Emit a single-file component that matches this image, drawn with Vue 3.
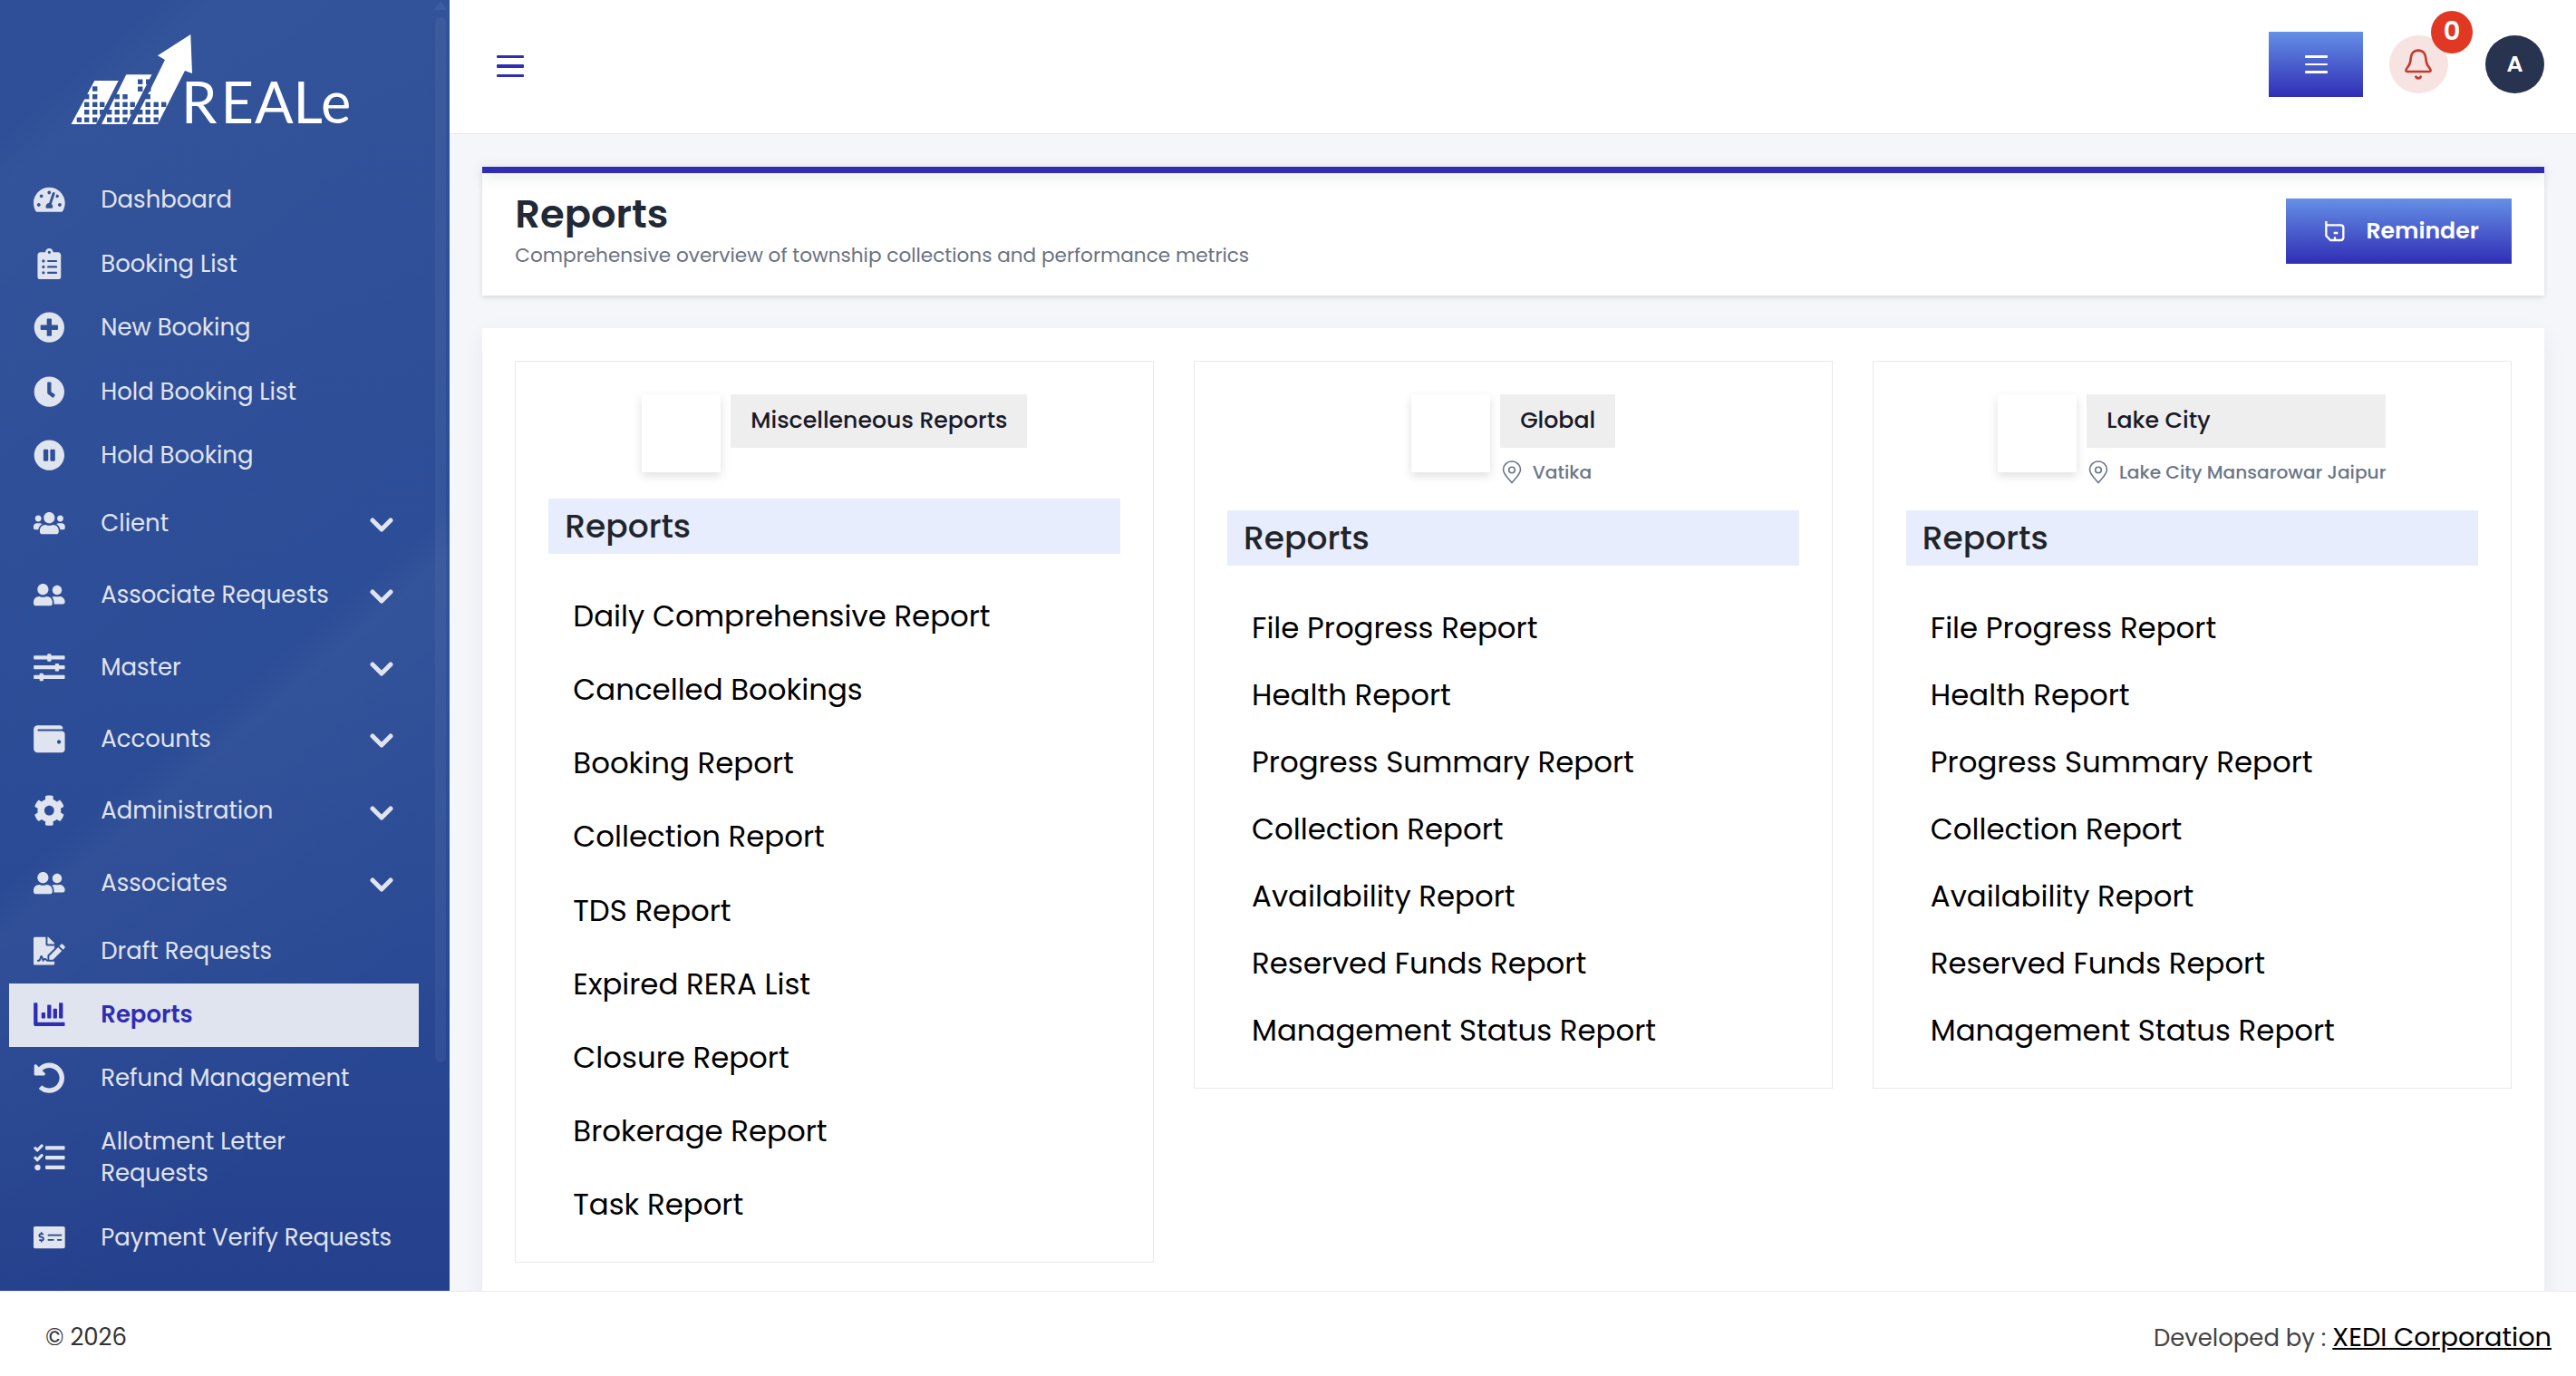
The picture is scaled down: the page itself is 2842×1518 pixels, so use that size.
<script setup>
const circle = 'M256 8C119 8 8 119 8 256s111 248 248 248 248-111 248-248S393 8 256 8z'
const icons = {
  gauge: { w: 576, d: 'M288 32C128.94 32 0 160.94 0 320c0 52.8 14.25 102.26 39.06 144.8 5.61 9.62 16.3 15.2 27.44 15.2h443c11.14 0 21.83-5.58 27.44-15.2C561.75 422.26 576 372.8 576 320c0-159.06-128.94-288-288-288zm0 64c14.71 0 26.58 10.13 30.32 23.65-1.11 2.26-2.64 4.23-3.45 6.67l-9.22 27.67c-5.13 3.49-10.97 6.01-17.64 6.01-17.67 0-32-14.33-32-32S270.33 96 288 96zM96 384c-17.67 0-32-14.33-32-32s14.33-32 32-32 32 14.33 32 32-14.33 32-32 32zm48-160c-17.67 0-32-14.33-32-32s14.33-32 32-32 32 14.33 32 32-14.33 32-32 32zm246.77-72.41l-61.33 184C343.13 347.33 352 364.54 352 384c0 11.72-3.38 22.55-8.88 32H232.88c-5.5-9.45-8.88-20.28-8.88-32 0-33.94 26.5-61.43 59.9-63.59l61.34-184.01c4.17-12.56 17.73-19.45 30.36-15.17 12.57 4.19 19.35 17.79 15.17 30.36zm14.66 57.2l15.52-46.55c3.47-1.29 7.13-2.23 11.05-2.23 17.67 0 32 14.33 32 32s-14.33 32-32 32c-11.38-.01-20.89-6.28-26.57-15.22zM480 384c-17.67 0-32-14.33-32-32s14.33-32 32-32 32 14.33 32 32-14.33 32-32 32z' },
  clipboard: { w: 384, d: 'M336 64h-80c0-35.3-28.7-64-64-64s-64 28.7-64 64H48C21.5 64 0 85.5 0 112v352c0 26.5 21.5 48 48 48h288c26.5 0 48-21.5 48-48V112c0-26.5-21.5-48-48-48zM96 424c-13.3 0-24-10.7-24-24s10.7-24 24-24 24 10.7 24 24-10.7 24-24 24zm0-96c-13.3 0-24-10.7-24-24s10.7-24 24-24 24 10.7 24 24-10.7 24-24 24zm0-96c-13.3 0-24-10.7-24-24s10.7-24 24-24 24 10.7 24 24-10.7 24-24 24zm96-192c13.3 0 24 10.7 24 24s-10.7 24-24 24-24-10.7-24-24 10.7-24 24-24zm128 368c0 4.4-3.6 8-8 8H168c-4.4 0-8-3.6-8-8v-16c0-4.4 3.6-8 8-8h144c4.4 0 8 3.6 8 8v16zm0-96c0 4.4-3.6 8-8 8H168c-4.4 0-8-3.6-8-8v-16c0-4.4 3.6-8 8-8h144c4.4 0 8 3.6 8 8v16zm0-96c0 4.4-3.6 8-8 8H168c-4.4 0-8-3.6-8-8v-16c0-4.4 3.6-8 8-8h144c4.4 0 8 3.6 8 8v16z' },
  plus: { w: 512, d: circle + 'm144 276c0 6.6-5.4 12-12 12h-92v92c0 6.6-5.4 12-12 12h-56c-6.6 0-12-5.4-12-12v-92h-92c-6.6 0-12-5.4-12-12v-56c0-6.6 5.4-12 12-12h92v-92c0-6.6 5.4-12 12-12h56c6.6 0 12 5.4 12 12v92h92c6.6 0 12 5.4 12 12v56z' },
  clock: { w: 512, d: circle + 'm92.49 313l-20 25a16 16 0 0 1-22.49 2.5l-67-49.72a40 40 0 0 1-15-31.23V112a16 16 0 0 1 16-16h32a16 16 0 0 1 16 16V256l58 42.5A16 16 0 0 1 348.49 321z' },
  pause: { w: 512, d: circle + 'm-16 328c0 8.8-7.2 16-16 16h-48c-8.8 0-16-7.2-16-16V176c0-8.8 7.2-16 16-16h48c8.8 0 16 7.2 16 16v160zm112 0c0 8.8-7.2 16-16 16h-48c-8.8 0-16-7.2-16-16V176c0-8.8 7.2-16 16-16h48c8.8 0 16 7.2 16 16v160z' },
  users: { w: 640, d: 'M96 224c35.3 0 64-28.7 64-64s-28.7-64-64-64-64 28.7-64 64 28.7 64 64 64zm448 0c35.3 0 64-28.7 64-64s-28.7-64-64-64-64 28.7-64 64 28.7 64 64 64zm32 32h-64c-17.6 0-33.5 7.1-45.1 18.6 40.3 22.1 68.9 62 75.1 109.4h66c17.7 0 32-14.3 32-32v-32c0-35.3-28.7-64-64-64zm-256 0c61.9 0 112-50.1 112-112S381.9 32 320 32 208 82.1 208 144s50.1 112 112 112zm76.8 32h-8.3c-20.8 10-43.9 16-68.5 16s-47.6-6-68.5-16h-8.3C179.6 288 128 339.6 128 403.2V432c0 26.5 21.5 48 48 48h288c26.5 0 48-21.5 48-48v-28.8c0-63.6-51.6-115.2-115.2-115.2zm-223.7-13.4C161.5 263.1 145.6 256 128 256H64c-35.3 0-64 28.7-64 64v32c0 17.7 14.3 32 32 32h65.9c6.3-47.4 34.9-87.3 75.2-109.4z' },
  friends: { w: 640, d: 'M192 256c61.9 0 112-50.1 112-112S253.9 32 192 32 80 82.1 80 144s50.1 112 112 112zm76.8 32h-8.3c-20.8 10-43.9 16-68.5 16s-47.6-6-68.5-16h-8.3C51.6 288 0 339.6 0 403.2V432c0 26.5 21.5 48 48 48h288c26.5 0 48-21.5 48-48v-28.8c0-63.6-51.6-115.2-115.2-115.2zM480 256c53 0 96-43 96-96s-43-96-96-96-96 43-96 96 43 96 96 96zm48 32h-3.8c-13.9 4.8-28.6 8-44.2 8s-30.3-3.2-44.2-8H432c-20.4 0-39.2 5.9-55.7 15.4 24.4 26.3 39.7 61.2 39.7 99.8v38.4c0 2.2-.5 4.3-.6 6.4H592c26.5 0 48-21.5 48-48 0-61.9-50.1-112-112-112z' },
  sliders: { w: 512, d: 'M496 384H160v-16c0-8.8-7.2-16-16-16h-32c-8.8 0-16 7.2-16 16v16H16c-8.8 0-16 7.2-16 16v32c0 8.8 7.2 16 16 16h80v16c0 8.8 7.2 16 16 16h32c8.8 0 16-7.2 16-16v-16h336c8.8 0 16-7.2 16-16v-32c0-8.8-7.2-16-16-16zm0-160h-80v-16c0-8.8-7.2-16-16-16h-32c-8.8 0-16 7.2-16 16v16H16c-8.8 0-16 7.2-16 16v32c0 8.8 7.2 16 16 16h336v16c0 8.8 7.2 16 16 16h32c8.8 0 16-7.2 16-16v-16h80c8.8 0 16-7.2 16-16v-32c0-8.8-7.2-16-16-16zm0-160H288V48c0-8.8-7.2-16-16-16h-32c-8.8 0-16 7.2-16 16v16H16C7.2 64 0 71.2 0 80v32c0 8.8 7.2 16 16 16h208v16c0 8.8 7.2 16 16 16h32c8.8 0 16-7.2 16-16v-16h208c8.8 0 16-7.2 16-16V80c0-8.8-7.2-16-16-16z' },
  wallet: { w: 512, d: 'M461.2 128H80c-8.84 0-16-7.16-16-16s7.16-16 16-16h384c8.84 0 16-7.16 16-16 0-26.51-21.49-48-48-48H64C28.65 32 0 60.65 0 96v320c0 35.35 28.65 64 64 64h397.2c28.02 0 50.8-21.53 50.8-48V176c0-26.47-22.78-48-50.8-48zM416 336c-17.67 0-32-14.33-32-32s14.33-32 32-32 32 14.33 32 32-14.33 32-32 32z' },
  cog: { w: 512, d: 'M487.4 315.7l-42.6-24.6c4.3-23.2 4.3-47 0-70.2l42.6-24.6c4.9-2.8 7.1-8.6 5.5-14-11.1-35.6-30-67.8-54.7-94.6-3.8-4.1-10-5.1-14.8-2.3L380.8 110c-17.9-15.4-38.5-27.3-60.8-35.1V25.8c0-5.6-3.9-10.5-9.4-11.7-36.7-8.2-74.3-7.8-109.2 0-5.5 1.2-9.4 6.1-9.4 11.7V75c-22.2 7.9-42.8 19.8-60.8 35.1L88.7 85.5c-4.9-2.8-11-1.9-14.8 2.3-24.7 26.7-43.6 58.9-54.7 94.6-1.7 5.4.6 11.2 5.5 14L67.3 221c-4.3 23.2-4.3 47 0 70.2l-42.6 24.6c-4.9 2.8-7.1 8.6-5.5 14 11.1 35.6 30 67.8 54.7 94.6 3.8 4.1 10 5.1 14.8 2.3l42.6-24.6c17.9 15.4 38.5 27.3 60.8 35.1v49.2c0 5.6 3.9 10.5 9.4 11.7 36.7 8.2 74.3 7.8 109.2 0 5.5-1.2 9.4-6.1 9.4-11.7v-49.2c22.2-7.9 42.8-19.8 60.8-35.1l42.6 24.6c4.9 2.8 11 1.9 14.8-2.3 24.7-26.7 43.6-58.9 54.7-94.6 1.5-5.5-.7-11.3-5.6-14.1zM256 336c-44.1 0-80-35.9-80-80s35.9-80 80-80 80 35.9 80 80-35.9 80-80 80z' },
  draft: { w: 576, d: 'M218.17 424.14c-2.95-5.92-8.09-6.52-10.17-6.52s-7.22.59-10.02 6.19l-7.67 15.34c-6.37 12.78-25.03 11.37-29.48-2.09L144 386.59l-10.61 31.88c-5.89 17.66-22.38 29.53-41 29.53H80c-8.84 0-16-7.16-16-16s7.16-16 16-16h12.39c4.83 0 9.11-3.08 10.64-7.66l18.19-54.64c3.3-9.81 12.44-16.41 22.78-16.41s19.48 6.59 22.77 16.41l13.88 41.64c19.75-16.19 54.06-9.7 66 14.16 1.89 3.78 5.49 5.95 9.36 6.26v-82.12l128-127.09V160H248c-13.2 0-24-10.8-24-24V0H24C10.7 0 0 10.7 0 24v464c0 13.3 10.7 24 24 24h336c13.3 0 24-10.7 24-24v-40l-128-.11c-16.12-.31-30.58-9.28-37.83-23.75zM384 121.9c0-6.3-2.5-12.4-7-16.9L279.1 7c-4.5-4.5-10.6-7-17-7H256v128h128v-6.1zm-96 225.06V416h68.99l161.68-162.78-67.88-67.88L288 346.96zm280.54-179.63l-31.87-31.87c-9.94-9.94-26.07-9.94-36.01 0l-27.25 27.25 67.88 67.88 27.25-27.25c9.95-9.94 9.95-26.07 0-36.01z' },
  chart: { w: 512, d: 'M332.8 320h38.4c6.4 0 12.8-6.4 12.8-12.8V172.8c0-6.4-6.4-12.8-12.8-12.8h-38.4c-6.4 0-12.8 6.4-12.8 12.8v134.4c0 6.4 6.4 12.8 12.8 12.8zm96 0h38.4c6.4 0 12.8-6.4 12.8-12.8V76.8c0-6.4-6.4-12.8-12.8-12.8h-38.4c-6.4 0-12.8 6.4-12.8 12.8v230.4c0 6.4 6.4 12.8 12.8 12.8zm-288 0h38.4c6.4 0 12.8-6.4 12.8-12.8v-70.4c0-6.4-6.4-12.8-12.8-12.8h-38.4c-6.4 0-12.8 6.4-12.8 12.8v70.4c0 6.4 6.4 12.8 12.8 12.8zm96 0h38.4c6.4 0 12.8-6.4 12.8-12.8V108.8c0-6.4-6.4-12.8-12.8-12.8h-38.4c-6.4 0-12.8 6.4-12.8 12.8v198.4c0 6.4 6.4 12.8 12.8 12.8zM496 384H64V80c0-8.84-7.16-16-16-16H16C7.16 64 0 71.16 0 80v336c0 17.67 14.33 32 32 32h464c8.84 0 16-7.16 16-16v-32c0-8.84-7.16-16-16-16z' },
  undo: { w: 512, d: 'M255.545 8c-66.269.119-126.438 26.233-170.86 68.685L48.971 40.971C33.851 25.851 8 36.559 8 57.941V192c0 13.255 10.745 24 24 24h134.059c21.382 0 32.09-25.851 16.971-40.971l-41.75-41.75c30.864-28.899 70.801-44.907 113.23-45.273 92.398-.798 170.283 73.977 169.484 169.442C423.236 348.009 349.816 424 256 424c-41.127 0-79.997-14.678-110.63-41.556-4.743-4.161-11.906-3.908-16.368.553L89.34 422.659c-4.872 4.872-4.631 12.815.482 17.433C133.798 479.813 192.074 504 256 504c136.966 0 247.999-111.033 248-247.998C504.001 119.193 392.354 7.755 255.545 8z' },
  tasks: { w: 512, d: 'M139.61 35.5a12 12 0 0 0-17 0L58.93 98.81l-22.7-22.12a12 12 0 0 0-17 0L3.53 92.41a12 12 0 0 0 0 17l47.59 47.4a12.78 12.78 0 0 0 17.61 0l15.59-15.62L156.52 69a12.09 12.09 0 0 0 .09-17zm0 159.19a12 12 0 0 0-17 0l-63.68 63.72-22.7-22.1a12 12 0 0 0-17 0L3.53 252a12 12 0 0 0 0 17L51 316.5a12.77 12.77 0 0 0 17.6 0l15.7-15.69 72.2-72.22a12 12 0 0 0 .09-16.9zM64 368c-26.49 0-48.59 21.5-48.59 48S37.53 464 64 464a48 48 0 0 0 0-96zm432 16H208a16 16 0 0 0-16 16v32a16 16 0 0 0 16 16h288a16 16 0 0 0 16-16v-32a16 16 0 0 0-16-16zm0-320H208a16 16 0 0 0-16 16v32a16 16 0 0 0 16 16h288a16 16 0 0 0 16-16V80a16 16 0 0 0-16-16zm0 160H208a16 16 0 0 0-16 16v32a16 16 0 0 0 16 16h288a16 16 0 0 0 16-16v-32a16 16 0 0 0-16-16z' },
  check: { w: 640, d: 'M608 32H32C14.33 32 0 46.33 0 64v384c0 17.67 14.33 32 32 32h576c17.67 0 32-14.33 32-32V64c0-17.67-14.33-32-32-32zM176 327.88V344c0 4.42-3.58 8-8 8h-16c-4.42 0-8-3.58-8-8v-16.29c-11.29-.58-22.27-4.52-31.37-11.35-3.9-2.93-4.1-8.77-.57-12.14l11.75-11.21c2.77-2.64 6.89-2.76 10.13-.73 3.87 2.42 8.26 3.72 12.82 3.72h28.11c6.5 0 11.8-5.92 11.8-13.19 0-5.95-3.61-11.19-8.77-12.73l-45-13.5c-18.59-5.58-31.58-23.42-31.58-43.39 0-24.52 19.05-44.44 42.67-45.07V152c0-4.42 3.58-8 8-8h16c4.42 0 8 3.58 8 8v16.29c11.29.58 22.27 4.51 31.37 11.35 3.9 2.93 4.1 8.77.57 12.14l-11.75 11.21c-2.77 2.64-6.89 2.76-10.13.73-3.87-2.43-8.26-3.72-12.82-3.72h-28.11c-6.5 0-11.8 5.92-11.8 13.19 0 5.95 3.61 11.19 8.77 12.73l45 13.5c18.59 5.58 31.58 23.42 31.58 43.39 0 24.53-19.05 44.44-42.67 45.07zM416 312c0 4.42-3.58 8-8 8H296c-4.42 0-8-3.58-8-8v-16c0-4.42 3.58-8 8-8h112c4.42 0 8 3.58 8 8v16zm160 0c0 4.42-3.58 8-8 8h-80c-4.42 0-8-3.58-8-8v-16c0-4.42 3.58-8 8-8h80c4.42 0 8 3.58 8 8v16zm0-96c0 4.42-3.58 8-8 8H296c-4.42 0-8-3.58-8-8v-16c0-4.42 3.58-8 8-8h272c4.42 0 8 3.58 8 8v16z' },
  box: { w: 512, d: 'M32 70H480C496 70 504 78 504 94V424C504 440 496 448 480 448H32C16 448 8 440 8 424V94C8 78 16 70 32 70z' }
}

const nav = [
  { icon: 'gauge', lines: ['Dashboard'] },
  { icon: 'clipboard', lines: ['Booking List'] },
  { icon: 'plus', lines: ['New Booking'] },
  { icon: 'clock', lines: ['Hold Booking List'] },
  { icon: 'pause', lines: ['Hold Booking'] },
  { icon: 'users', lines: ['Client'], more: true },
  { icon: 'friends', lines: ['Associate Requests'], more: true },
  { icon: 'sliders', lines: ['Master'], more: true },
  { icon: 'wallet', lines: ['Accounts'], more: true },
  { icon: 'cog', lines: ['Administration'], more: true },
  { icon: 'friends', lines: ['Associates'], more: true },
  { icon: 'draft', lines: ['Draft Requests'] },
  { icon: 'chart', lines: ['Reports'], active: true },
  { icon: 'undo', lines: ['Refund Management'] },
  { icon: 'tasks', lines: ['Allotment Letter', 'Requests'] },
  { icon: 'check', lines: ['Payment Verify Requests'] },
  { icon: 'box', lines: ['File Check'] }
]

const siteReports = [
  'File Progress Report', 'Health Report', 'Progress Summary Report', 'Collection Report',
  'Availability Report', 'Reserved Funds Report', 'Management Status Report'
]
const cards = [
  {
    name: 'Miscelleneous Reports',
    roomy: true,
    reports: [
      'Daily Comprehensive Report', 'Cancelled Bookings', 'Booking Report', 'Collection Report',
      'TDS Report', 'Expired RERA List', 'Closure Report', 'Brokerage Report', 'Task Report'
    ]
  },
  { name: 'Global', place: 'Vatika', reports: siteReports },
  { name: 'Lake City', place: 'Lake City Mansarowar Jaipur', reports: siteReports }
]

// Squares cut out of the logo's three towers, as [x, y] offsets.
const windows = [
  [102, 95.3], [102, 104], [93, 104], [93, 112.6], [102, 112.6], [110, 112.6], [93, 121], [102, 121], [110, 121],
  [84.7, 129.5], [93, 129.5], [102, 129.5],
  [135.3, 104], [126.5, 104], [126.5, 112.6], [135.3, 112.6], [143.5, 112.6], [118, 121], [126.5, 121], [135.3, 121], [143.5, 121],
  [118, 129.5], [126.5, 129.5], [135.3, 129.5],
  [152, 87.5], [152, 95.5], [161, 87.5], [161, 95.5],
  [160.5, 104], [160.5, 112.6], [169.5, 112.6], [178, 112.6], [152, 121], [160.5, 121], [169.5, 121],
  [152, 129.5], [160.5, 129.5], [169.5, 129.5]
]
</script>

<template>
  <div class="app">
    <div class="upper">
      <aside class="sidebar">
        <svg class="logo" viewBox="0 0 496 186">
          <g fill="#fff">
            <path d="M104.3 89H130.7L106 137H78.5z" />
            <path d="M139.3 82.3H167.5L139.5 137H112z" />
            <path d="M146 137L163 104.5 182 66 174 61.3 210.3 38 212 81 204 78 174 137z" />
          </g>
          <rect v-for="([x, y], i) in windows" :key="i" :x="x" :y="y" width="5.4" height="5.4" fill="#30529a" />
          <text x="200 243.5 281 323.5 354" y="136" fill="#fff" class="brand">REALe</text>
        </svg>
        <nav>
          <div v-for="(n, i) in nav" :key="i" class="item" :class="{ more: n.more, active: n.active, tall: n.lines.length > 1 }">
            <svg class="ico" :viewBox="`0 0 ${icons[n.icon].w} 512`"><path :d="icons[n.icon].d" fill="currentColor" fill-rule="evenodd" /></svg>
            <div class="label">
              <div v-for="t in n.lines" :key="t" class="line">{{ t }}</div>
            </div>
            <svg v-if="n.more" class="chev" viewBox="0 0 26 16"><path d="M3 3L13 13 23 3" /></svg>
          </div>
        </nav>
        <svg class="up" viewBox="0 0 12 10"><path d="M6 0L12 8V10H0V8z" fill="currentColor" /></svg>
        <div class="thumb"></div>
      </aside>

      <div class="main">
        <header class="top">
          <div class="burger"><i></i><i></i><i></i></div>
          <div class="tools">
            <button class="btn menu"><span class="bars"><i></i><i></i><i></i></span></button>
            <div class="bell">
              <svg viewBox="0 0 98 112"><path d="M48 11C32 11 24 23 23 37C22 51 21 57 13 66C4 77 6 81 14 81H82C90 81 92 77 83 66C75 57 74 51 73 37C72 23 64 11 48 11zM40 98C43 105 53 105 56 98" /></svg>
              <span class="badge">0</span>
            </div>
            <div class="avatar">A</div>
          </div>
        </header>

        <section class="title">
          <div class="bar"></div>
          <div class="titlerow">
            <div>
              <h1>Reports</h1>
              <p>Comprehensive overview of township collections and performance metrics</p>
            </div>
            <button class="btn reminder">
              <svg viewBox="0 0 72 78"><path d="M10 6V54L24 69H58Q67 69 67 60V28Q67 19 58 19H10M35 45H49M39 58V68" /></svg>
              <span>Reminder</span>
            </button>
          </div>
        </section>

        <section class="board">
          <article v-for="c in cards" :key="c.name" class="card" :class="{ roomy: c.roomy }">
            <div class="head">
              <div class="pic"></div>
              <div class="meta">
                <div class="tag">{{ c.name }}</div>
                <div v-if="c.place" class="place">
                  <svg viewBox="0 0 22 26"><path d="M11 24.5C6 18.5 1.5 15 1.5 10A9.5 9 0 0 1 20.5 10C20.5 15 16 18.5 11 24.5z" /><circle cx="11" cy="10.5" r="3.3" /></svg>
                  <span>{{ c.place }}</span>
                </div>
              </div>
            </div>
            <h2>Reports</h2>
            <ul>
              <li v-for="t in c.reports" :key="t">{{ t }}</li>
            </ul>
          </article>
        </section>
      </div>
    </div>
    <footer>
      <span>© 2026</span>
      <div class="dev">Developed by : <a>XEDI Corporation</a></div>
    </footer>
  </div>
</template>

<style>
body { margin: 0; overflow: hidden; }
</style>

<style scoped>
* { box-sizing: border-box; }
.app {
  width: 2842px; height: 1518px; display: flex; flex-direction: column; overflow: hidden;
  font-family: Poppins, Inter, sans-serif; background: #f5f6fa; white-space: nowrap;
}
h1, h2, p, ul { margin: 0; padding: 0; }
.upper { display: flex; height: 1424px; overflow: hidden; }
.sidebar {
  position: relative; width: 496px; height: 1424px; flex: none; overflow: hidden; color: #e0e4ef;
  background:
    linear-gradient(139.7deg, transparent 8%, rgba(255, 255, 255, .02) 11%, transparent 53%, rgba(255, 255, 255, .03) 56%, transparent 84%),
    linear-gradient(#2f5098, #2c4d97 50%, #294994 75%, #25408c);
}
.logo { display: block; width: 496px; height: 186px; }
.brand { font-family: Lato, sans-serif; font-size: 63px; }
nav { display: flex; flex-direction: column; }
.item { display: flex; align-items: center; height: 70.4px; flex: none; margin-left: 10px; width: 452px; padding-left: 27px; padding-bottom: 1.2px; }
.item.more { height: 79.4px; }
.item.tall { height: 105px; padding-bottom: 2px; }
.item:last-child { padding: 2px 0 0 27px; }
.item.active { background: #e0e4ef; color: #302db5; font-weight: 600; }
.ico { width: 34.7px; height: 34.4px; flex: none; }
.label { margin-left: 39.6px; flex: 1; font-size: 25.92px; }
.line { line-height: 34.5px; }
.chev { width: 26px; height: 16px; margin-right: 28.5px; margin-top: 4px; fill: none; stroke: currentColor; stroke-width: 5; stroke-linecap: round; stroke-linejoin: round; }
.thumb { position: absolute; left: 480px; top: 19px; width: 12px; height: 1153px; border-radius: 6px; background: rgba(255, 255, 255, .05); }
.up { position: absolute; left: 480px; top: 1px; width: 12px; height: 10px; color: rgba(255, 255, 255, .06); }

.main { flex: 1; display: flex; flex-direction: column; min-width: 0; }
.top { height: 148px; flex: none; background: #fff; border-bottom: 1px solid #e8e9ec; display: flex; justify-content: space-between; padding: 0 35px 0 52px; }
.burger { margin-top: 61px; width: 30px; height: 24px; display: flex; flex-direction: column; justify-content: space-between; }
.burger i { height: 3.4px; border-radius: 1px; background: #302db5; }
.tools { display: flex; align-items: flex-start; }
.btn { border: 0; height: 72px; padding: 0; color: #fff; background: linear-gradient(#6590e6, #302db5); display: flex; align-items: center; font-family: inherit; }
.menu { width: 104px; margin-top: 35px; justify-content: center; }
.bars { width: 25px; height: 20px; display: flex; flex-direction: column; justify-content: space-between; }
.bars i { height: 2.8px; border-radius: 1px; background: #fff; }
.bell { position: relative; width: 65px; height: 64px; margin: 39px 41px 0 29px; border-radius: 50%; background: #f7e3e2; }
.bell svg { display: block; width: 32.7px; height: 37.3px; margin: 12.7px 0 0 16px; fill: none; stroke: #c53a2f; stroke-width: 8; stroke-linecap: round; stroke-linejoin: round; }
.badge { position: absolute; left: 46px; top: -27px; width: 46px; height: 47px; border-radius: 50%; background: #e13824; color: #fff; font-size: 28.8px; font-weight: 600; line-height: 45px; text-align: center; }
.avatar { width: 65px; height: 64px; margin-top: 39px; border-radius: 50%; background: #28334f; color: #fff; font-size: 25.2px; font-weight: 600; line-height: 63px; text-align: center; }

.title { height: 142px; flex: none; margin: 36px 35px 0 36px; background: #fff; box-shadow: 0 2px 6px rgba(0, 0, 0, .12); }
.bar { height: 7px; background: #302db5; box-shadow: 0 4px 16px rgba(40, 60, 60, .16); }
.titlerow { display: flex; justify-content: space-between; padding: 28px 36px 0 36.3px; }
h1 { font-size: 43.2px; line-height: 50px; font-weight: 600; color: #1f2937; margin-top: -8px; }
p { font-size: 21.6px; line-height: 30px; margin-top: 6px; color: #6b7280; }
.reminder { width: 249px; padding-left: 41px; font-size: 25.2px; font-weight: 600; }
.reminder svg { width: 24px; height: 26px; margin-right: 23.4px; fill: none; stroke: #fff; stroke-width: 7; stroke-linejoin: round; }

.board { margin: 36px 35px 0 36px; height: 1100px; flex: none; background: #fff; padding: 36px 36px 0 36.3px; display: flex; align-items: flex-start; gap: 43.6px; box-shadow: 0 8px 24px rgba(20, 30, 80, .06); }
.card { flex: 1; height: 803px; border: 1px solid #e9e9ea; padding: 36px 36px 0; min-width: 0; }
.card.roomy { height: 995px; }
.head { display: flex; justify-content: center; gap: 11px; height: 128px; }
.roomy .head { height: 115px; }
.pic { width: 87px; height: 86px; background: #fff; box-shadow: 0 4px 10px rgba(0, 0, 0, .13); }
.tag { height: 59px; padding: 0 21.8px; background: #eee; color: #1a1a27; font-size: 25.2px; font-weight: 500; line-height: 58px; }
.place { display: flex; align-items: center; height: 26px; margin-top: 14px; color: #6b7688; font-size: 20.16px; font-weight: 500; }
.place svg { width: 22px; height: 26px; margin: 0 11.5px 0 2px; fill: none; stroke: currentColor; stroke-width: 1.6; flex: none; }
h2 { height: 61px; background: #e8edfe; color: #212529; font-size: 36px; font-weight: 500; line-height: 61px; padding-left: 18px; }
ul { list-style: none; padding: 32px 0 0 27px; color: #000; font-size: 32.4px; }
.roomy ul { padding-top: 28px; }
li { height: 74px; line-height: 74px; }
.roomy li { height: 81.15px; line-height: 81.15px; }

footer { height: 94px; background: #fff; border-top: 1px solid #eaebec; display: flex; justify-content: space-between; align-items: center; padding: 8px 27px 0 50px; font-size: 25.92px; color: #333; }
.dev { color: #444; }
.dev a { color: #000; font-size: 28.8px; text-decoration: underline; }
</style>
